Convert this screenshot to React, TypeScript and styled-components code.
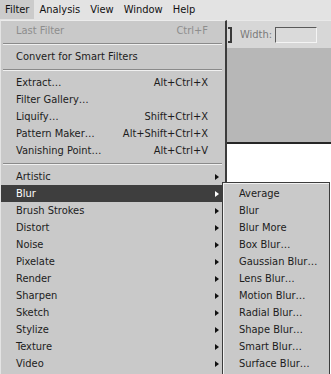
import * as React from "react";
import styled, { createGlobalStyle } from "styled-components";

const GlobalStyle = createGlobalStyle`
    *, *::before, *::after {
        box-sizing: border-box;
    }
    html, body {
        margin: 0;
        padding: 0;
        background: #ffffff;
    }
    #root {
        width: 331px;
        height: 374px;
        overflow: hidden;
    }
`;

const Screen = styled.div`
    font-family: "DejaVu Sans Condensed", "DejaVu Sans", "Liberation Sans", sans-serif;
    font-size: 11px;
    color: #1c1c1c;
    display: flex;
    flex-direction: column;
    width: 331px;
    height: 374px;
    overflow: hidden;
`;

const MenuBar = styled.div`
    display: flex;
    height: 20px;
    background: #e3e3e3;
    flex-shrink: 0;
`;

const BarItem = styled.div<{ $active?: boolean }>`
    display: flex;
    align-items: center;
    padding: 0 5px;
    height: 19px;
    background: ${(p) => (p.$active ? "#cbcbcb" : "transparent")};
    color: #111;
`;

const Body = styled.div`
    display: flex;
    flex: 1;
    min-height: 0;
`;

const Menu = styled.div`
    position: relative;
    width: 227px;
    flex-shrink: 0;
    background: #c9c9c9;
    border-top: 1px solid #ececec;
    border-left: 1px solid #e4e4e4;
    border-right: 2px solid #3c3c3c;
    padding: 1px 3px 40px 0;
`;

const Item = styled.div<{ $hot?: boolean; $disabled?: boolean }>`
    position: relative;
    display: flex;
    align-items: center;
    height: 17px;
    padding: 0 0 0 15px;
    background: ${(p) => (p.$hot ? "#3e3e3e" : "transparent")};
    color: ${(p) => (p.$hot ? "#ffffff" : p.$disabled ? "#8d8d8d" : "#1c1c1c")};
    white-space: nowrap;
`;

const Label = styled.span`
    flex: 1;
`;

const Shortcut = styled.span`
    padding-right: 14px;
`;

const Arrow = styled.span<{ $hot?: boolean }>`
    width: 0;
    height: 0;
    margin-right: 3px;
    border-top: 3.5px solid transparent;
    border-bottom: 3.5px solid transparent;
    border-left: 4px solid ${(p) => (p.$hot ? "#ffffff" : "#111111")};
`;

const Separator = styled.div`
    height: 9px;
    display: flex;
    flex-direction: column;
    justify-content: center;
    padding: 0 0 0 2px;

    &::before {
        content: "";
        height: 1px;
        background: #8a8a8a;
    }
    &::after {
        content: "";
        height: 1px;
        background: #f0f0f0;
    }
`;

const SubMenu = styled.div`
    position: absolute;
    left: 100%;
    top: -3px;
    width: 108px;
    background: #c9c9c9;
    border: 1px solid #3c3c3c;
    box-shadow: inset 1px 1px 0 #f2f2f2;
    padding: 2px 2px 20px 1px;
    color: #1c1c1c;
    z-index: 2;
`;

const SubItem = styled.div`
    display: flex;
    align-items: center;
    height: 17px;
    padding-left: 15px;
    white-space: nowrap;
`;

const Workspace = styled.div`
    flex: 1;
    display: flex;
    flex-direction: column;
`;

const Toolbar = styled.div`
    display: flex;
    align-items: center;
    height: 28px;
    background: #d7d7d7;
    border-top: 1px solid #e9e9e9;
    gap: 8px;
`;

const FieldStub = styled.div`
    width: 4px;
    height: 16px;
    margin-left: 1px;
    background: #d7d7d7;
    border: 2px solid #3a3a3a;
    border-left: none;
`;

const FieldLabel = styled.span`
    color: #7a7a7a;
`;

const Field = styled.div`
    width: 42px;
    height: 16px;
    margin-left: -5px;
    background: #dadada;
    border-top: 1px solid #5a5a5a;
    border-left: 1px solid #5a5a5a;
    border-right: 1px solid #f4f4f4;
    border-bottom: 1px solid #f4f4f4;
`;

const GrayArea = styled.div`
    height: 96px;
    background: #b7b7b7;
    border-bottom: 2px solid #262626;
`;

const Canvas = styled.div`
    flex: 1;
    background: #ffffff;
`;

type Entry =
    | { kind: "sep" }
    | { kind: "item"; label: string; shortcut?: string; sub?: boolean; disabled?: boolean };

const entries: Entry[] = [
    { kind: "item", label: "Last Filter", shortcut: "Ctrl+F", disabled: true },
    { kind: "sep" },
    { kind: "item", label: "Convert for Smart Filters" },
    { kind: "sep" },
    { kind: "item", label: "Extract…", shortcut: "Alt+Ctrl+X" },
    { kind: "item", label: "Filter Gallery…" },
    { kind: "item", label: "Liquify…", shortcut: "Shift+Ctrl+X" },
    { kind: "item", label: "Pattern Maker…", shortcut: "Alt+Shift+Ctrl+X" },
    { kind: "item", label: "Vanishing Point…", shortcut: "Alt+Ctrl+V" },
    { kind: "sep" },
    { kind: "item", label: "Artistic", sub: true },
    { kind: "item", label: "Blur", sub: true },
    { kind: "item", label: "Brush Strokes", sub: true },
    { kind: "item", label: "Distort", sub: true },
    { kind: "item", label: "Noise", sub: true },
    { kind: "item", label: "Pixelate", sub: true },
    { kind: "item", label: "Render", sub: true },
    { kind: "item", label: "Sharpen", sub: true },
    { kind: "item", label: "Sketch", sub: true },
    { kind: "item", label: "Stylize", sub: true },
    { kind: "item", label: "Texture", sub: true },
    { kind: "item", label: "Video", sub: true },
];

const blurFilters = [
    "Average",
    "Blur",
    "Blur More",
    "Box Blur…",
    "Gaussian Blur…",
    "Lens Blur…",
    "Motion Blur…",
    "Radial Blur…",
    "Shape Blur…",
    "Smart Blur…",
    "Surface Blur…",
];

export default function App() {
    const [open] = React.useState("Blur");

    return (
        <Screen>
            <GlobalStyle />
            <MenuBar>
                <BarItem $active>Filter</BarItem>
                <BarItem>Analysis</BarItem>
                <BarItem>View</BarItem>
                <BarItem>Window</BarItem>
                <BarItem>Help</BarItem>
            </MenuBar>
            <Body>
                <Menu>
                    {entries.map((e, i) => {
                        if (e.kind === "sep") return <Separator key={i} />;
                        const hot = e.label === open;
                        return (
                            <Item key={i} $hot={hot} $disabled={e.disabled}>
                                <Label>{e.label}</Label>
                                {e.shortcut && <Shortcut>{e.shortcut}</Shortcut>}
                                {e.sub && <Arrow $hot={hot} />}
                                {hot && (
                                    <SubMenu>
                                        {blurFilters.map((f) => (
                                            <SubItem key={f}>{f}</SubItem>
                                        ))}
                                    </SubMenu>
                                )}
                            </Item>
                        );
                    })}
                </Menu>
                <Workspace>
                    <Toolbar>
                        <FieldStub />
                        <FieldLabel>Width:</FieldLabel>
                        <Field />
                    </Toolbar>
                    <GrayArea />
                    <Canvas />
                </Workspace>
            </Body>
        </Screen>
    );
}
